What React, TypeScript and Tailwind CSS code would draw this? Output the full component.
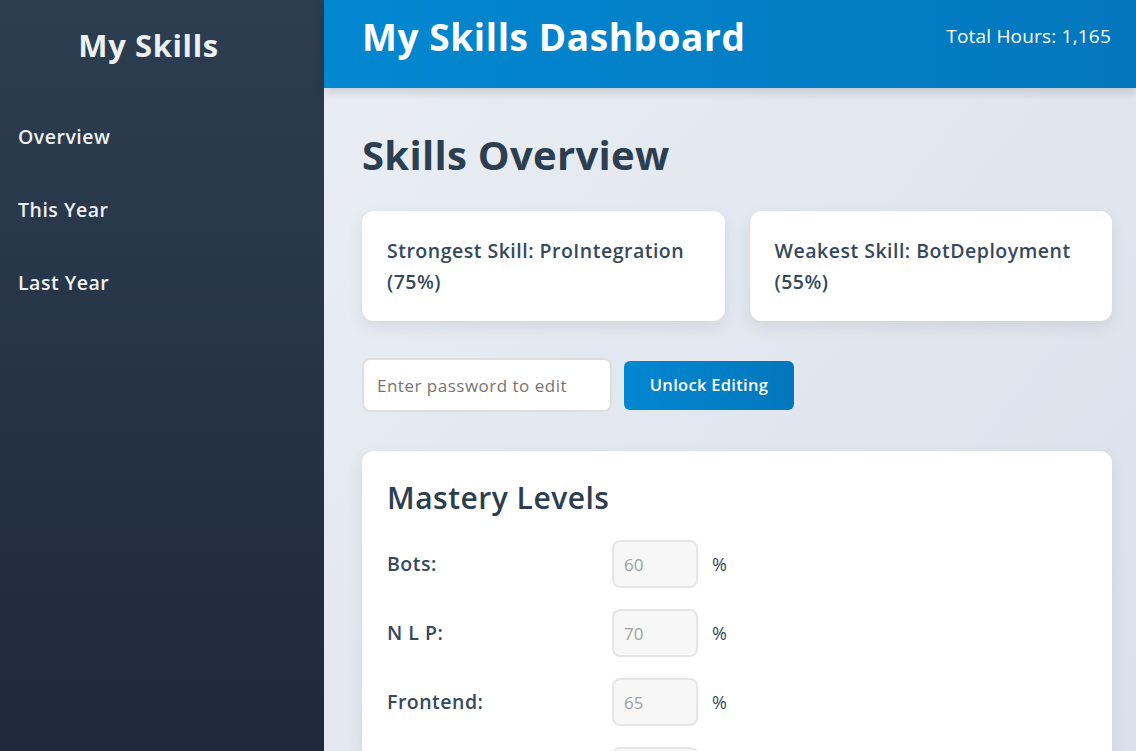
import { useState } from 'react';

const skills = [
  { name: 'Bots', value: 60 },
  { name: 'N L P', value: 70 },
  { name: 'Frontend', value: 65 },
  { name: 'Backend', value: 72 },
  { name: 'ProIntegration', value: 75 },
  { name: 'BotDeployment', value: 55 },
];

const navItems = ['Overview', 'This Year', 'Last Year'];

const App = () => {
  const [password, setPassword] = useState<string>('');

  return (
    <div className="flex min-h-screen font-['Open_Sans',sans-serif]">
      <aside className="w-[324px] shrink-0 h-screen sticky top-0 bg-linear-to-b from-[#2d3e50] to-[#1e293b] text-[#ecf0f1]">
        <h2 className="text-center text-[31px] font-bold tracking-[0.6px] pt-[22px] pr-[27px] leading-[46px]">My Skills</h2>
        <nav className="flex flex-col mt-[55px] px-[18px] gap-[46px]">
          {navItems.map(item => (
            <a key={item} className="text-[19.5px] font-semibold tracking-[0.5px] leading-[27px] cursor-pointer">{item}</a>
          ))}
        </nav>
      </aside>

      <div className="flex-1 flex flex-col min-w-0 bg-linear-to-br from-[#eaeef4] to-[#d8dfe9]">
        <header className="h-[88px] flex items-center justify-between pl-[38px] pr-[25px] pb-[16px] bg-linear-to-r from-[#0288d1] to-[#0277bd] text-white shadow-[0_4px_10px_rgba(0,0,0,0.15)] relative z-10">
          <h1 className="text-[37px] font-bold tracking-[0.6px] leading-none">My Skills Dashboard</h1>
          <div className="text-[19px] tracking-[0.2px] leading-none">Total Hours: 1,165</div>
        </header>

        <main className="px-[38px] pt-[42px] pb-10 pr-[24px]">
          <h2 className="text-[40px] font-bold tracking-[0.3px] text-[#2c3e50] leading-[50px]">Skills Overview</h2>

          <div className="grid grid-cols-2 gap-[25px] mt-[31px]">
            <div className="bg-white rounded-[12px] shadow-[0_6px_16px_rgba(0,0,0,0.08)] px-[25px] pt-[24px] pb-[24px] h-[110px]">
              <p className="text-[19.5px] font-semibold tracking-[0.5px] text-[#34495e] leading-[31px]">Strongest Skill: ProIntegration (75%)</p>
            </div>
            <div className="bg-white rounded-[12px] shadow-[0_6px_16px_rgba(0,0,0,0.08)] px-[25px] pt-[24px] pb-[24px] h-[110px]">
              <p className="text-[19.5px] font-semibold tracking-[0.5px] text-[#34495e] leading-[31px]">Weakest Skill: BotDeployment (55%)</p>
            </div>
          </div>

          <div className="flex items-center gap-[12px] mt-[37px]">
            <input
              type="password"
              value={password}
              onChange={e => setPassword(e.target.value)}
              placeholder="Enter password to edit"
              className="w-[250px] h-[54px] px-[13px] rounded-[8px] border-2 border-[#dedede] bg-white text-[17px] tracking-[0.5px] text-[#333] placeholder:text-[#757575] outline-none"
            />
            <button className="w-[170px] h-[49px] rounded-[6px] bg-linear-to-r from-[#0288d1] to-[#0277bd] text-white text-[16.5px] font-semibold tracking-[0.3px]">
              Unlock Editing
            </button>
          </div>

          <div className="bg-white rounded-[12px] shadow-[0_6px_16px_rgba(0,0,0,0.08)] mt-[39px] px-[25px] pt-[26px] pb-[25px]">
            <h3 className="text-[30px] font-semibold tracking-[0.5px] text-[#2c3e50] leading-[42px]">Mastery Levels</h3>
            <div className="flex flex-col gap-[21px] mt-[21px]">
              {skills.map(s => (
                <div key={s.name} className="flex items-center">
                  <label className="w-[225px] text-[19.5px] font-semibold tracking-[0.5px] text-[#34495e]">{s.name}:</label>
                  <input
                    type="number"
                    value={s.value}
                    disabled
                    className="w-[86px] h-[48px] px-[10px] rounded-[8px] border-2 border-[#e6e6e6] bg-[#f7f7f7] text-[17px] text-[#a0a0a0]"
                  />
                  <span className="ml-[14px] text-[18px] text-[#34495e]">%</span>
                </div>
              ))}
            </div>
          </div>
        </main>
      </div>
    </div>
  );
};

export default App;
